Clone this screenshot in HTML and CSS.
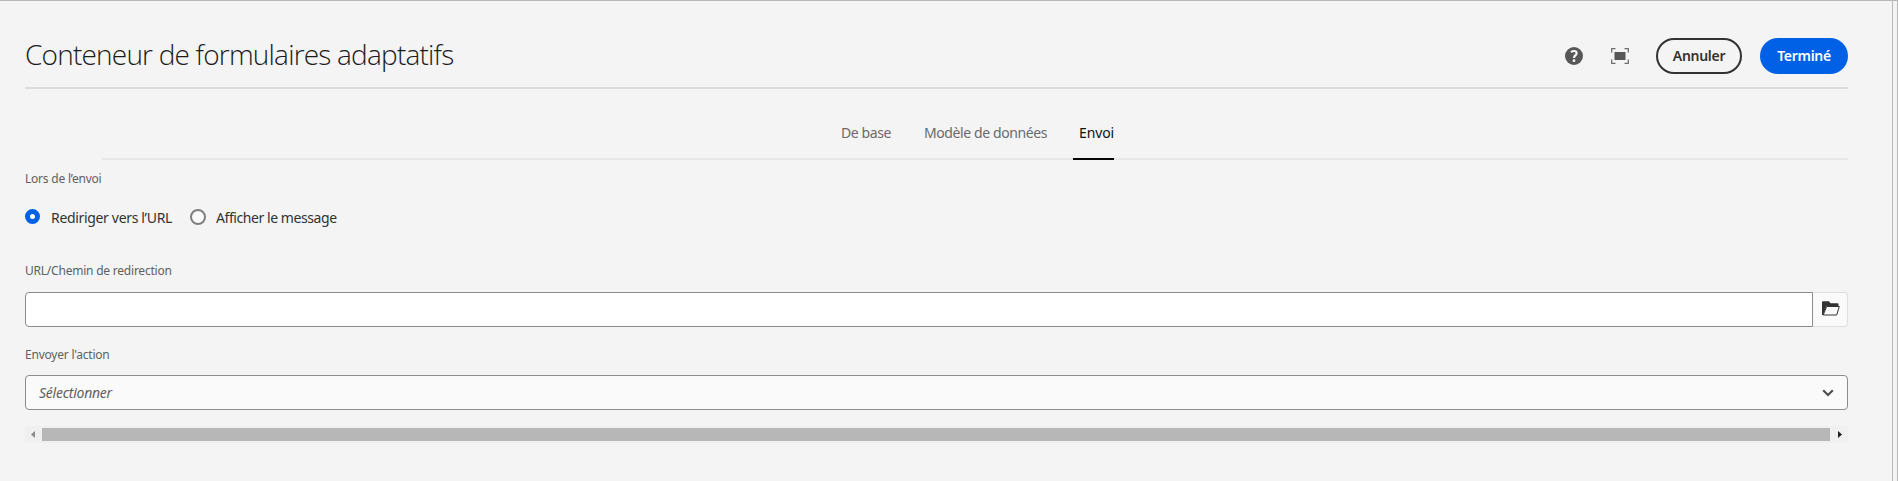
FILE: index.html
```html
<!DOCTYPE html>
<html lang="fr">
<head>
<meta charset="utf-8">
<title>Conteneur de formulaires adaptatifs</title>
<link rel="stylesheet" href="styles.css">
</head>
<body>
<div class="frame">
<main class="dialog">
  <header class="header">
    <h1 class="title">Conteneur de formulaires adaptatifs</h1>
    <div class="actions">
      <svg class="icon help" width="18" height="18" viewBox="0 0 18 18"><circle cx="9" cy="9" r="9" fill="#575757"/><path d="M6 5.200Q7.500 4 9.200 4Q11.600 4 11.600 6.200Q11.600 7.500 10.200 8.500Q9 9.400 9 11" fill="none" stroke="#f4f4f4" stroke-width="2.200"/><circle cx="9" cy="13.700" r="1.400" fill="#f4f4f4"/></svg>
      <svg class="icon full" width="18" height="16" viewBox="0 0 18 16"><rect x="3.500" y="4" width="11" height="8" fill="#575757"/><path d="M.7 4.500V.7H4.500M13.500.7H17.300V4.500M17.300 11.500V15.300H13.500M4.500 15.300H.7V11.500" fill="none" stroke="#707070" stroke-width="1.300"/></svg>
      <button class="button cancel"><span>Annuler</span></button>
      <button class="button done"><span>Terminé</span></button>
    </div>
  </header>
  <nav class="tabs">
    <a class="tab base">De base</a>
    <a class="tab model">Modèle de données</a>
    <a class="tab send selected">Envoi</a>
  </nav>
  <section class="form">
    <div class="label on-send"><span>Lors de l’envoi</span></div>
    <div class="radios">
      <span class="radio checked"></span><span class="radio-text redirect">Rediriger vers l’URL</span>
      <span class="radio"></span><span class="radio-text message">Afficher le message</span>
    </div>
    <div class="label url"><span>URL/Chemin de redirection</span></div>
    <div class="path-field">
      <input class="input" type="text">
      <button class="browse"><svg width="18" height="15" viewBox="0 0 18 15"><path d="M0 14V1.500Q0 .3 1 .3H7L8.500 2.200H15.500Q16.500 2.200 16.500 3.200V5H4.500L1 14Z" fill="#323232"/><path d="M4.700 5.500H17.300L14.700 14H1.200Z" fill="#fafafa" stroke="#323232"/></svg></button>
    </div>
    <div class="label action"><span>Envoyer l'action</span></div>
    <div class="select"><span class="placeholder">Sélectionner</span><svg width="12" height="8" viewBox="0 0 12 8"><path d="M1.200 1.200L6 6L10.800 1.200" fill="none" stroke="#4b4b4b" stroke-width="2"/></svg></div>
    <div class="scrollbar">
      <svg class="arrow" width="17" height="17" viewBox="0 0 17 17"><path d="M10 5v7L6 8.500Z" fill="#8b8b8b"/></svg>
      <div class="thumb"></div>
      <svg class="arrow" width="18" height="17" viewBox="0 0 18 17"><path d="M8 5v7l4-3.500Z" fill="#202020"/></svg>
    </div>
  </section>
</main>
</div>
</body>
</html>
```
FILE: styles.css
```css
* { box-sizing: border-box; }
body { margin: 0; background: #f4f4f4; color: #323232; font: 14px/20px "Noto Sans", "Open Sans", sans-serif; }
.frame { width: 1898px; height: 481px; border-top: 1px solid #b9b9b9; border-right: 1px solid #b9b9b9; padding-right: 4px; overflow: hidden; }
.dialog { height: 480px; border-right: 1px solid #b9b9b9; padding: 0 44px 0 25px; }
button { font: inherit; padding: 0; }
.header { height: 88px; border-bottom: 2px solid #dcdcdc; display: flex; justify-content: space-between; }
.title { margin: 33px 0 0; font: 300 28px/40px "Open Sans", sans-serif; white-space: nowrap; color: #1c1c1c; letter-spacing: -.8px; }
.actions { display: flex; align-items: center; height: 36px; margin-top: 37px; }
.help { margin-right: 28px; }
.full { margin-right: 27px; }
.button { height: 36px; border-radius: 18px; font-weight: 600; white-space: nowrap; letter-spacing: -.3px; }
.cancel { width: 86px; margin-right: 18px; border: 2px solid #323232; background: transparent; color: #323232; }
.done { width: 88px; border: 0; background: #0060e6; color: #fff; }
.tabs { height: 71px; margin-left: 77px; padding: 30px 0 0 739px; border-bottom: 2px solid #e7e7e7; display: flex; color: #6a6a6a; }
.tab { height: 41px; padding-top: 4px; white-space: nowrap; letter-spacing: -.4px; }
.base { width: 83px; }
.model { width: 149px; }
.send { width: 41px; padding-left: 6px; letter-spacing: -.1px; }
.selected { color: #111; border-bottom: 2px solid #050505; }
.label { height: 20px; font-size: 12px; color: #606060; white-space: nowrap; letter-spacing: -.22px; }
.on-send { margin-top: 9px; }
.radios { display: flex; height: 20px; margin-top: 19px; }
.radio { width: 16px; height: 16px; margin-top: 1px; border: 2px solid #808080; border-radius: 50%; background: #fafafa; }
.radio.checked { width: 15px; height: 15px; border: 5px solid #0060e6; background: #fff; }
.radio-text { margin-left: 10px; white-space: nowrap; letter-spacing: -.43px; }
.redirect { width: 139px; margin-left: 11px; letter-spacing: -.33px; }
.url { margin-top: 33px; }
.path-field { display: flex; height: 35px; margin-top: 11px; }
.input { width: 1788px; height: 35px; border: 1px solid #8c8c8c; border-radius: 4px 0 0 4px; background: #fff; outline: 0; }
.browse { width: 35px; height: 35px; border: 1px solid #dedede; border-left: 0; border-radius: 0 4px 4px 0; background: #fafafa; display: flex; align-items: center; justify-content: center; }
.browse svg { margin: 0 0 2px 2px; }
.action { margin-top: 18px; }
.select { height: 35px; margin-top: 10px; padding: 0 13px; border: 1px solid #8c8c8c; border-radius: 4px; background: #fafafa; display: flex; align-items: center; justify-content: space-between; color: #606060; font-style: italic; letter-spacing: -.25px; }
.scrollbar { height: 17px; margin-top: 16px; background: #f0f0f0; display: flex; align-items: center; }
.thumb { flex: 1; height: 13px; background: #b7b7b7; }
```
